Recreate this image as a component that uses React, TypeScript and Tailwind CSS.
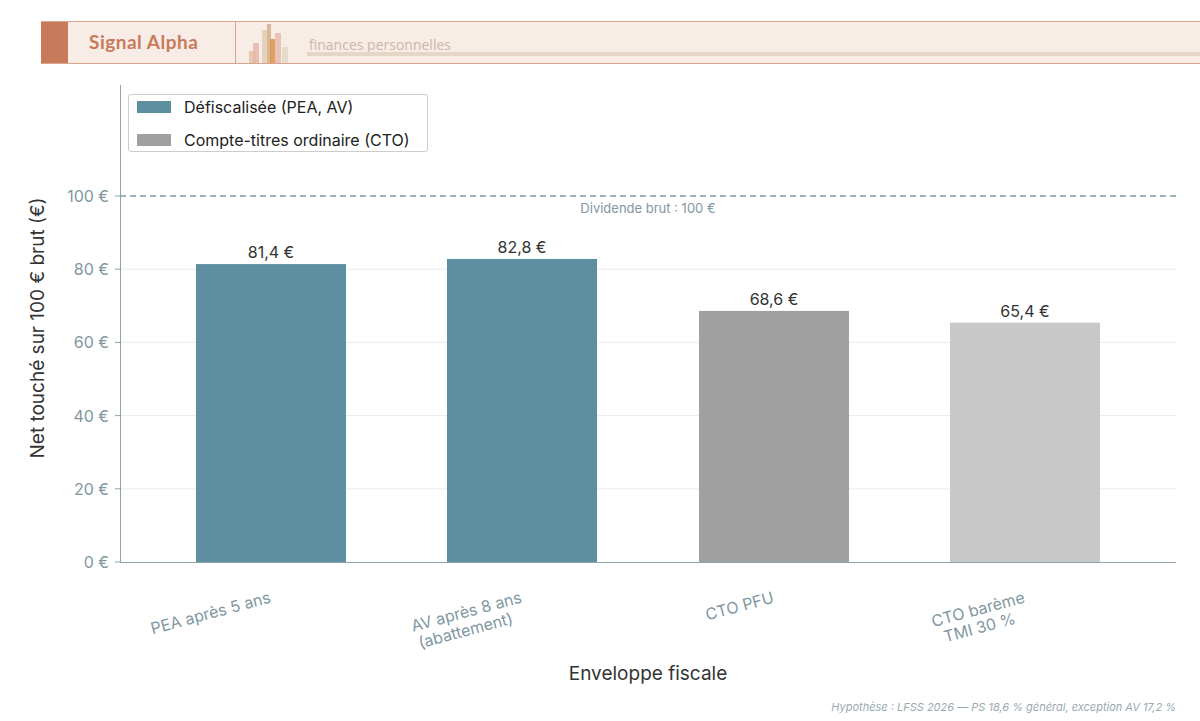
export default function App() {
  const y = (v: number) => 562 - v * 3.66;
  const bars = [
    { x: 196, v: 81.4, c: "#5d8fa0", l: "81,4 €", lab: ["PEA après 5 ans"] },
    { x: 447, v: 82.8, c: "#5d8fa0", l: "82,8 €", lab: ["AV après 8 ans", "(abattement)"] },
    { x: 699, v: 68.6, c: "#a0a0a0", l: "68,6 €", lab: ["CTO PFU"] },
    { x: 950, v: 65.4, c: "#c8c8c8", l: "65,4 €", lab: ["CTO barème", "TMI 30 %"] },
  ];
  const font = "Inter, 'Noto Sans', sans-serif";
  return (
    <div className="w-[1200px] h-[721px] bg-white relative overflow-hidden" style={{ fontFamily: font }}>
      <div className="absolute left-[41px] top-[21px] right-0 h-[43px] bg-[#f7ece6] border-t border-b border-[#d9a58c] flex items-stretch">
        <div className="w-[27px] bg-[#c97a5a]" />
        <div className="w-[168px] flex items-center pl-[21px] text-[19px] font-semibold text-[#c97a5a] border-r border-[#d9a58c]" style={{ fontFamily: "Lato, sans-serif", fontWeight: 700, letterSpacing: "0.5px" }}>Signal Alpha</div>
        <div className="w-[70px] flex items-end pl-[13px]">
          <svg width="42" height="40" viewBox="0 0 42 40">
            <rect x="0" y="28" width="7" height="12" fill="#e4c9ae" />
            <rect x="4" y="20" width="6" height="20" fill="#e8b4a8" opacity="0.8" />
            <rect x="13" y="7" width="7" height="33" fill="#e6d2b8" />
            <rect x="18" y="1" width="4" height="39" fill="#d9b99a" />
            <rect x="21" y="16" width="6" height="24" fill="#d8903f" opacity="0.8" />
            <rect x="26" y="10" width="6" height="30" fill="#ebc3b6" />
            <rect x="33" y="24" width="6" height="16" fill="#e6dccb" />
          </svg>
        </div>
        <div className="flex-1 relative">
          <div className="absolute left-[3px] top-[12px] text-[14px] text-[#cfb6a3]" style={{ fontFamily: "'Open Sans', sans-serif" }}>finances personnelles</div>
          <div className="absolute left-[1px] right-0 top-[30px] h-[4px] bg-[#e6d6c8]" />
        </div>
      </div>
      <svg width="1200" height="721" className="absolute left-0 top-0" style={{ fontFamily: font }}>
        {[20, 40, 60, 80].map((v) => (
          <line key={v} x1="120" x2="1176" y1={y(v)} y2={y(v)} stroke="#ebebeb" />
        ))}
        <line x1="120" x2="1176" y1={y(100)} y2={y(100)} stroke="#7f9aa6" strokeWidth="1.5" strokeDasharray="6 4" />
        <text x="648" y="213" textAnchor="middle" fontSize="13" fill="#7f97a2">Dividende brut : 100 €</text>
        {bars.map((b) => (
          <g key={b.x}>
            <rect x={b.x} y={y(b.v)} width="150" height={b.v * 3.66} fill={b.c} />
            <text x={b.x + 75} y={y(b.v) - 6} textAnchor="middle" fontSize="16" fill="#333">{b.l}</text>
            <text transform={`translate(${b.x + 75 - 4},${585}) rotate(-15)`} textAnchor="end" fontSize="16" fill="#7f97a2">
              {b.lab.map((t, i) => (
                <tspan key={i} x={b.lab.length > 1 && i === 1 ? -(b.lab[0].length - t.length) * 0 - 14 : 0} dy={i === 0 ? 18 : 18}>{t}</tspan>
              ))}
            </text>
          </g>
        ))}
        <line x1="120.5" x2="120.5" y1="85" y2="562" stroke="#8fa3ad" />
        <line x1="120" x2="1176" y1="562.5" y2="562.5" stroke="#8fa3ad" />
        {[0, 20, 40, 60, 80, 100].map((v) => (
          <g key={v}>
            <line x1="115" x2="120" y1={y(v)} y2={y(v)} stroke="#8fa3ad" />
            <text x="109" y={y(v) + 6} textAnchor="end" fontSize="16" fill="#7f97a2">{v} €</text>
          </g>
        ))}
        <text transform="translate(44,328) rotate(-90)" textAnchor="middle" fontSize="19" fill="#333">Net touché sur 100 € brut (€)</text>
        <text x="648" y="680" textAnchor="middle" fontSize="19" fill="#333">Enveloppe fiscale</text>
        <text x="1176" y="711" textAnchor="end" fontSize="11" fontStyle="italic" fill="#9aa9b0">Hypothèse : LFSS 2026 — PS 18,6 % général, exception AV 17,2 %</text>
      </svg>
      <div className="absolute left-[128px] top-[94px] w-[300px] h-[58px] border border-[#cccccc] rounded-[3px] bg-white/90 flex flex-col justify-center gap-[9px] pl-[8px] text-[16px] text-[#222]">
        <div className="flex items-center gap-[13px]"><span className="w-[34px] h-[12px] bg-[#5d8fa0]" />Défiscalisée (PEA, AV)</div>
        <div className="flex items-center gap-[13px]"><span className="w-[34px] h-[12px] bg-[#a0a0a0]" />Compte-titres ordinaire (CTO)</div>
      </div>
    </div>
  );
}
